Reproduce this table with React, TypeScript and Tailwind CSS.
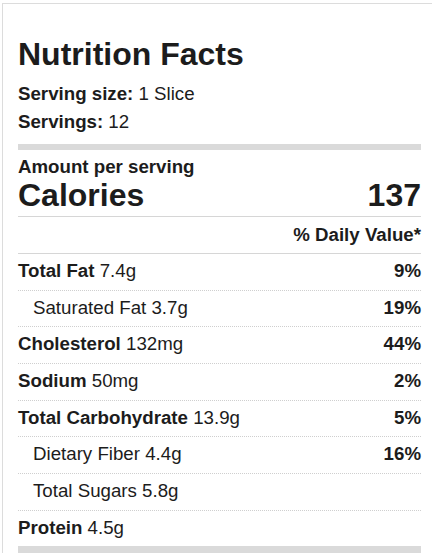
const rows = [
  { label: 'Total Fat', amount: '7.4g', dv: '9%', bold: true },
  { label: 'Saturated Fat', amount: '3.7g', dv: '19%', bold: false },
  { label: 'Cholesterol', amount: '132mg', dv: '44%', bold: true },
  { label: 'Sodium', amount: '50mg', dv: '2%', bold: true },
  { label: 'Total Carbohydrate', amount: '13.9g', dv: '5%', bold: true },
  { label: 'Dietary Fiber', amount: '4.4g', dv: '16%', bold: false },
  { label: 'Total Sugars', amount: '5.8g', dv: '', bold: false },
  { label: 'Protein', amount: '4.5g', dv: '', bold: true },
]

export default function App() {
  return (
    <div className="w-[432px] h-[553px] overflow-hidden bg-white text-[#1c1c1c] font-['Liberation_Sans',Arial,sans-serif]">
      <div className="ml-[2px] mt-[3px] w-[435px] border border-[#dcdcdc] px-[15px] pt-[32px]">
        <div className="w-[403px]">
          {/* Header */}
          <h1 className="text-[32px] leading-[36px] font-bold">Nutrition Facts</h1>
          <div className="mt-[8px] text-[18.7px] leading-[28px]">
            <div>
              <span className="font-bold">Serving size:</span> 1 Slice
            </div>
            <div>
              <span className="font-bold">Servings:</span> 12
            </div>
          </div>

          <div className="mt-[8px] h-[6px] bg-[#dadada]"></div>

          {/* Calories */}
          <div className="mt-[5px] text-[18.7px] leading-[24px] font-bold">Amount per serving</div>
          <div className="flex justify-between items-baseline border-b border-[#d6d6d6] pb-[5px] text-[32px] leading-[32px] font-bold">
            <span>Calories</span>
            <span>137</span>
          </div>
          <div className="border-b border-[#d6d6d6] pt-[6px] pb-[6px] text-right text-[18.7px] leading-[24px] font-bold">
            % Daily Value*
          </div>

          {/* Nutrients */}
          {rows.map((r, i) => (
            <div
              key={r.label}
              className={
                'flex justify-between pt-[6px] pb-[8px] text-[18.7px] leading-[21.67px] ' +
                (i < rows.length - 1 ? 'border-b border-dotted border-[#cfcfcf]' : '')
              }
            >
              <span className={r.bold ? '' : 'pl-[15px]'}>
                {r.bold ? <span className="font-bold">{r.label}</span> : r.label} {r.amount}
              </span>
              <span className="font-bold">{r.dv}</span>
            </div>
          ))}

          <div className="h-[8px] bg-[#dadada]"></div>
        </div>
      </div>
    </div>
  )
}
